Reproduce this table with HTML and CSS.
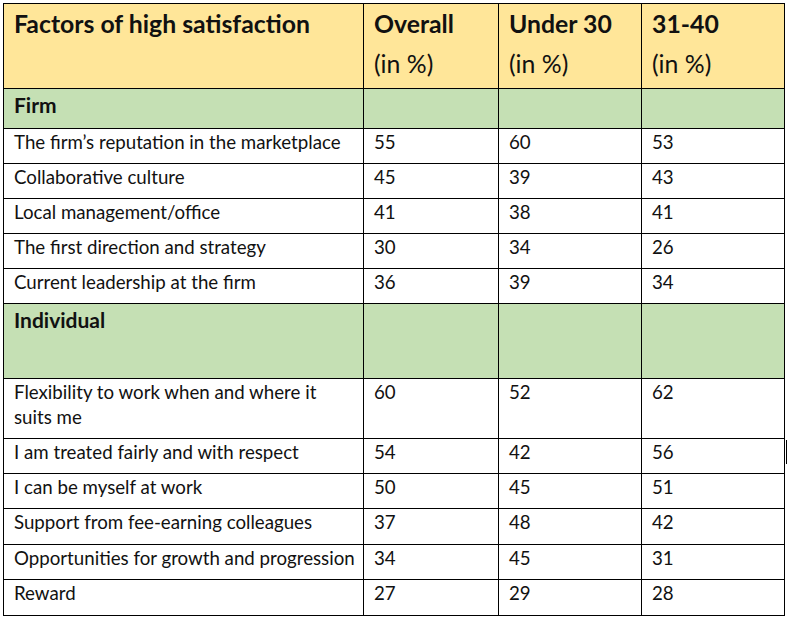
FILE: index.html
```html
<!DOCTYPE html>
<html lang="en">
<head>
<meta charset="utf-8">
<title>Factors of high satisfaction</title>
<link rel="stylesheet" href="styles.css">
</head>
<body>
<div class="page">
<table class="survey">
  <colgroup>
    <col class="c-factor">
    <col class="c-num">
    <col class="c-num2">
    <col class="c-num2">
  </colgroup>
  <thead>
    <tr class="head">
      <th>Factors of high satisfaction</th>
      <th>Overall<br><span class="unit">(in %)</span></th>
      <th>Under 30<br><span class="unit">(in %)</span></th>
      <th>31-40<br><span class="unit">(in %)</span></th>
    </tr>
  </thead>
  <tbody>
    <tr class="group"><td>Firm</td><td></td><td></td><td></td></tr>
    <tr><td>The firm’s reputation in the marketplace</td><td>55</td><td>60</td><td>53</td></tr>
    <tr><td>Collaborative culture</td><td>45</td><td>39</td><td>43</td></tr>
    <tr><td>Local management/office</td><td>41</td><td>38</td><td>41</td></tr>
    <tr><td>The first direction and strategy</td><td>30</td><td>34</td><td>26</td></tr>
    <tr><td>Current leadership at the firm</td><td>36</td><td>39</td><td>34</td></tr>
    <tr class="group tall"><td>Individual</td><td></td><td></td><td></td></tr>
    <tr><td>Flexibility to work when and where it suits me</td><td>60</td><td>52</td><td>62</td></tr>
    <tr><td>I am treated fairly and with respect</td><td>54</td><td>42</td><td>56</td></tr>
    <tr><td>I can be myself at work</td><td>50</td><td>45</td><td>51</td></tr>
    <tr class="roomy"><td>Support from fee-earning colleagues</td><td>37</td><td>48</td><td>42</td></tr>
    <tr><td class="nowrap">Opportunities for growth and progression</td><td>34</td><td>45</td><td>31</td></tr>
    <tr class="roomy"><td>Reward</td><td>27</td><td>29</td><td>28</td></tr>
  </tbody>
</table>
<span class="cursor"></span>
</div>
</body>
</html>
```

FILE: styles.css
```css
html, body {
  margin: 0;
  padding: 0;
  background: #ffffff;
}
.page {
  position: relative;
  padding: 3px 0 0 3px;
}
.survey {
  border-collapse: collapse;
  table-layout: fixed;
  width: 782px;
  font-family: "Lato", "Open Sans", sans-serif;
  color: #111111;
}
.c-factor { width: 360px; }
.c-num { width: 135px; }
.c-num2 { width: 143px; }
.survey th,
.survey td {
  border: 1px solid #000000;
  text-align: left;
  vertical-align: top;
  padding: 1px 6px 8px 10px;
  font-size: 18.7px;
  line-height: 25px;
  height: 25px;
}
.survey td.nowrap {
  white-space: nowrap;
}
.survey .roomy td {
  padding-bottom: 9px;
}
.head th {
  background: #ffe699;
  font-size: 24.8px;
  font-weight: 700;
  line-height: 40px;
  padding: 0 6px 4px 10px;
  height: 80px;
}
.head .unit {
  font-weight: 400;
}
.group td {
  background: #c5e0b4;
  font-weight: 700;
  font-size: 21px;
  line-height: 30px;
  height: 30px;
  padding: 1px 6px 8px 10px;
}
.group.tall td {
  height: 65px;
}
.cursor {
  position: absolute;
  left: 786px;
  top: 440px;
  width: 1px;
  height: 24px;
  background: #000000;
}
```
